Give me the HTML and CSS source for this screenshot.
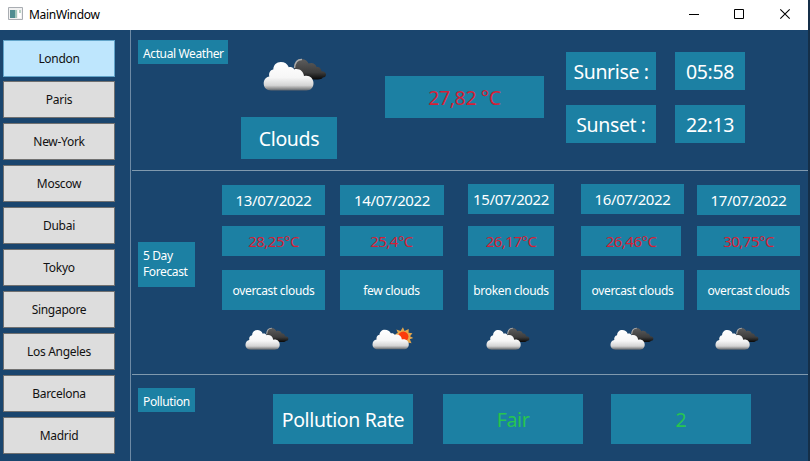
FILE: index.html
```html
<!DOCTYPE html>
<html lang="en">
<head>
<meta charset="utf-8">
<title>MainWindow</title>
<link rel="stylesheet" href="styles.css">
</head>
<body>
<svg class="defs" width="0" height="0" aria-hidden="true">
  <defs>
    <linearGradient id="white" x1="0" y1="0" x2="0" y2="1">
      <stop offset="0" stop-color="#fff"/><stop offset=".55" stop-color="#f6f6f6"/><stop offset=".82" stop-color="#d4d4d4"/><stop offset=".92" stop-color="#999"/><stop offset="1" stop-color="#5f666d"/>
    </linearGradient>
    <linearGradient id="dark" x1="0" y1="0" x2="0" y2="1">
      <stop offset="0" stop-color="#5d5d5d"/><stop offset=".65" stop-color="#3d3d3d"/><stop offset="1" stop-color="#080808"/>
    </linearGradient>
    <path id="front" d="M8 32.5C3.500 32.500 .7 29.500 .7 25.500C.7 21.500 3 19 6.300 18.400C5.500 15 7 12 10.300 11.400C10.500 7 13.500 4 17.800 4C21.600 4 24.400 5.900 25.800 9.300C28.400 8.500 30.300 9.600 31.200 11.400C36 10 40.500 13 41 18.100C46 16.500 50.500 20 50.500 25C50.500 29.800 47.500 32.500 43.500 32.500Z"/>
    <symbol id="clouds" viewBox="0 0 64 34">
      <path fill="url(#dark)" d="M31 10C31 4.500 34.500 1 38.800 1C42.500 1 44.700 3.300 45.600 5.600C49 4 53 6 53.600 9C57 8.500 58 11 58.500 13.200C61 13 63 14.400 63 16.500C63 18.500 61.800 19.300 59.800 19.600C59 21 57.300 21.500 55 21.500H40Z"/>
      <path fill="none" stroke="#aaa" stroke-width="1.500" d="M31.500 10C32 4 35 1.300 39 1.500"/>
      <use href="#front" fill="url(#white)"/>
    </symbol>
    <symbol id="sunny" viewBox="0 0 64 34">
      <path fill="#e5a64b" d="M45 0L47.400 5.300L53.400 2.500L53.200 8L58.800 8.500L55.300 13L60 15.500L55 17.500L57.500 23L51.500 22L45 23L34 10L37.500 8L35.500 3L41.500 5.300Z"/>
      <circle cx="45.500" cy="13.500" r="7.500" fill="#fb3a0d"/>
      <use href="#front" fill="url(#white)" transform="translate(0 -.5) scale(1.060 1)"/>
    </symbol>
  </defs>
</svg>
<div class="window">
  <header class="titlebar">
    <svg class="app-icon" width="16" height="14" viewBox="0 0 16 14"><path fill="#f1f1f1" stroke="#a9adb2" d="M.5.5h14v12H.5z"/><path fill="#4f8d91" d="M2 3h5v8H2z"/><path fill="#a2c7bb" d="M7 3h2v8H7z"/><path fill="#fff" d="M10 3h3v8h-3z"/><path fill="#b9d1c4" d="M11 3h2v3h-2z"/></svg>
    <span class="title">MainWindow</span>
    <svg class="controls" width="104" height="12" viewBox="0 0 104 12"><path fill="none" stroke="#000" d="M0 6.500h10M45.500 1.500h9v9h-9z"/><path fill="none" stroke="#000" stroke-width="1.100" d="M91.300 1.300l9.400 9.400M100.700 1.300l-9.400 9.400"/></svg>
  </header>
  <div class="body">
    <nav class="cities">
      <button class="city selected">London</button>
      <button class="city">Paris</button>
      <button class="city">New-York</button>
      <button class="city">Moscow</button>
      <button class="city">Dubai</button>
      <button class="city">Tokyo</button>
      <button class="city">Singapore</button>
      <button class="city">Los Angeles</button>
      <button class="city">Barcelona</button>
      <button class="city">Madrid</button>
    </nav>
    <main class="content">
      <section class="actual">
        <div class="tag tag-actual">Actual Weather</div>
        <div class="condition">
          <svg class="icon-large"><use href="#clouds"/></svg>
          <div class="tile large condition-name">Clouds</div>
        </div>
        <div class="tile large temp-now">27,82 °C</div>
        <div class="sun">
          <div class="tile large">Sunrise :</div><div class="tile large">05:58</div>
          <div class="tile large">Sunset :</div><div class="tile large">22:13</div>
        </div>
      </section>
      <section class="forecast">
        <div class="tag tag-forecast">5 Day<br>Forecast</div>
        <div class="days">
          <article class="day"><div class="tile date">13/07/2022</div><div class="tile temp">28,25°C</div><div class="tile desc">overcast clouds</div><svg class="icon"><use href="#clouds"/></svg></article>
          <article class="day second"><div class="tile date">14/07/2022</div><div class="tile temp">25,4°C</div><div class="tile desc">few clouds</div><svg class="icon"><use href="#sunny"/></svg></article>
          <article class="day third raised"><div class="tile date">15/07/2022</div><div class="tile temp">26,17°C</div><div class="tile desc">broken clouds</div><svg class="icon"><use href="#clouds"/></svg></article>
          <article class="day fourth raised"><div class="tile date">16/07/2022</div><div class="tile temp">26,46°C</div><div class="tile desc">overcast clouds</div><svg class="icon"><use href="#clouds"/></svg></article>
          <article class="day fifth"><div class="tile date">17/07/2022</div><div class="tile temp">30,75°C</div><div class="tile desc">overcast clouds</div><svg class="icon"><use href="#clouds"/></svg></article>
        </div>
      </section>
      <section class="pollution">
        <div class="tag tag-pollution">Pollution</div>
        <div class="tile large rate">Pollution Rate</div>
        <div class="tile large value">Fair</div>
        <div class="tile large value index">2</div>
      </section>
    </main>
  </div>
</div>
</body>
</html>
```

FILE: styles.css
```css
* { box-sizing: border-box; }
body {
  margin: 0;
  width: 810px;
  height: 461px;
  overflow: hidden;
  background: #152f48;
  font-family: "Noto Sans", "Open Sans", sans-serif;
  font-size: 12px;
}
svg { display: block; flex: none; }
.defs { position: absolute; }
.window { width: 808px; height: 461px; background: #1a456e; }
.titlebar {
  height: 30px;
  display: flex;
  align-items: center;
  background: #fff;
  padding: 0 15px 2px 8px;
}
.app-icon { margin-right: 5px; }
.title { flex: 1; color: #000; letter-spacing: -.3px; padding-top: 1px; }
.body { display: flex; height: 431px; }
.cities {
  width: 131px;
  flex: none;
  display: flex;
  flex-direction: column;
  gap: 4.9px;
  padding: 9.6px 15px 0 3px;
  border-right: 1px solid #6e8aa5;
}
.city {
  height: 37px;
  flex: none;
  padding: 0;
  border: 1px solid #707070;
  background: #ddd;
  color: #111;
  font: inherit;
  letter-spacing: -.3px;
}
.city.selected { background: #bee6fd; border-color: #62a4c9; }
.content { flex: 1; min-width: 0; padding-left: 1px; }
.tile {
  display: flex;
  align-items: center;
  justify-content: center;
  background: #1c80a3;
  color: #fff;
  white-space: nowrap;
}
.large { font-size: 19.500px; letter-spacing: -.38px; }
.tag {
  flex: none;
  background: #1c80a3;
  color: #fff;
  padding: 6px 0 0 5px;
  line-height: 16px;
  font-size: 12px;
  letter-spacing: -.38px;
  white-space: nowrap;
}
.actual { display: flex; height: 141px; padding-left: 6px; border-bottom: 1px solid #8099ae; }
.tag-actual { width: 90px; height: 24px; margin-top: 10px; }
.condition { width: 96px; margin: 28px 0 0 13px; }
.icon-large { width: 64px; height: 34px; margin-left: 22px; filter: blur(.4px); }
.condition-name { height: 42px; margin-top: 25px; }
.temp-now { width: 159px; height: 42px; margin: 46px 0 0 48px; color: #d51f36; }
.sun {
  display: grid;
  grid-template-columns: 90px 70px;
  grid-template-rows: 38px 38px;
  gap: 15px 19px;
  margin: 22px 0 0 22px;
}
.forecast { display: flex; height: 204px; padding-left: 6px; border-bottom: 1px solid #8099ae; }
.tag-forecast { width: 57px; height: 45px; margin-top: 71px; }
.days { display: flex; margin: 14px 0 0 27px; }
.day { width: 103px; flex: none; }
.second { margin-left: 15px; }
.second .date { width: 104px; }
.third { width: 86px; margin-left: 25px; }
.fourth { margin-left: 27px; }
.fourth .temp { width: 100px; }
.fifth { margin-left: 13px; }
.date { height: 30px; font-size: 15px; letter-spacing: -.4px; }
.raised .date { margin-top: -1px; margin-bottom: 12px; }
.temp { height: 30px; margin-top: 11px; font-size: 15px; letter-spacing: -.5px; color: #d51f36; }
.raised .temp { margin-top: 0; }
.desc { height: 40px; margin-top: 14px; font-size: 12px; letter-spacing: -.33px; }
.icon { width: 44px; height: 24px; margin: 17px 0 0 23px; filter: blur(.3px); }
.second .icon { margin-left: 32px; }
.third .icon { margin-left: 18px; }
.fourth .icon { margin-left: 29px; }
.fifth .icon { margin-left: 18px; }
.pollution { display: flex; padding-left: 6px; }
.tag-pollution { width: 57px; height: 24px; margin-top: 13px; }
.rate, .value { width: 140px; height: 50px; margin: 19px 0 0 30px; }
.rate { margin-left: 78px; }
.value { color: #27c550; }
.index { margin-left: 28px; }
```
